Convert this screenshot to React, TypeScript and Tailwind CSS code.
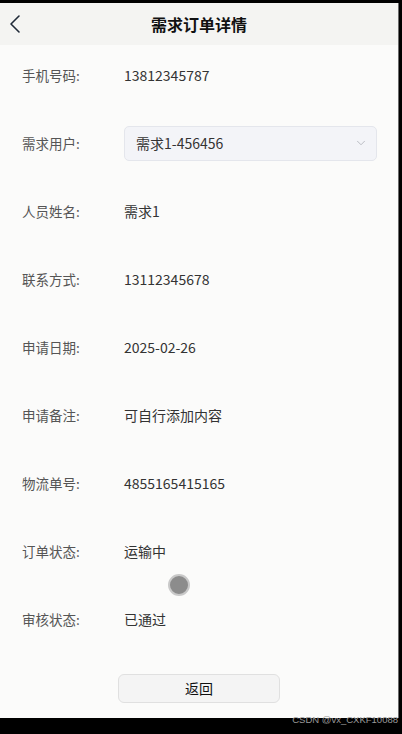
import { ChevronDown } from "lucide-react";

const FONT = { fontFamily: '"Noto Sans CJK SC", "Noto Sans", sans-serif' };

type Row = { label: string; value: string; select?: boolean };

const ROWS: Row[] = [
  { label: "手机号码:", value: "13812345787" },
  { label: "需求用户:", value: "需求1-456456", select: true },
  { label: "人员姓名:", value: "需求1" },
  { label: "联系方式:", value: "13112345678" },
  { label: "申请日期:", value: "2025-02-26" },
  { label: "申请备注:", value: "可自行添加内容" },
  { label: "物流单号:", value: "4855165415165" },
  { label: "订单状态:", value: "运输中" },
  { label: "审核状态:", value: "已通过" },
];

function BackIcon() {
  return (
    <svg width="12" height="20" viewBox="0 0 12 20" fill="none">
      <path d="M10 2 L2 10 L10 18" stroke="#1f2937" strokeWidth="1.6" strokeLinecap="round" strokeLinejoin="round" />
    </svg>
  );
}

function DetailRow({ row }: { row: Row }) {
  return (
    <div className="flex items-center h-[34px]">
      <span className="w-[124px] shrink-0 pl-[22px] text-[13.5px] text-[#555]">{row.label}</span>
      {row.select ? (
        <div className="flex items-center justify-between w-[253px] h-[35px] pl-[11px] pr-[8px] rounded-[5px] border border-[#e4e6ec] bg-[#f3f4f8]">
          <span className="text-[14px] text-[#333]">{row.value}</span>
          <ChevronDown size={14} strokeWidth={1.3} color="#a8abb2" />
        </div>
      ) : (
        <span className="text-[14px] text-[#333]">{row.value}</span>
      )}
    </div>
  );
}

export default function App() {
  return (
    <div style={FONT} className="relative flex flex-col h-[734px] w-[402px] bg-black">
      <div className="h-[3px]" />
      <div className="flex flex-col h-[715px] w-[399px] bg-[#fbfbfa] border-r border-[#6b6b6b]">
        <div className="relative flex items-center justify-center h-[42px] bg-[#f4f4f2]">
          <button type="button" className="absolute left-[9px] top-[11px]">
            <BackIcon />
          </button>
          <h1 className="text-[16px] font-bold text-[#111]">需求订单详情</h1>
        </div>

        <div className="relative flex flex-col gap-[34px] pt-[13px]">
          {ROWS.map((row) => (
            <DetailRow key={row.label} row={row} />
          ))}
          <div className="absolute left-[168px] top-[529px] w-[22px] h-[22px] rounded-full bg-[#8c8c8c] border-2 border-[#c9c9c9]" />
        </div>

        <div className="flex justify-center pt-[38px]">
          <button
            type="button"
            className="w-[162px] h-[29px] rounded-[6px] border border-[#e0e0e0] bg-[#f4f4f4] text-[14px] text-[#111]"
          >
            返回
          </button>
        </div>
      </div>
      <span
        className="absolute right-[4px] bottom-[10px] text-[9.5px] leading-none text-[#9a9a9a]"
        style={{ fontFamily: '"Liberation Sans", sans-serif' }}
      >
        CSDN @vx_CXKF10088
      </span>
    </div>
  );
}
